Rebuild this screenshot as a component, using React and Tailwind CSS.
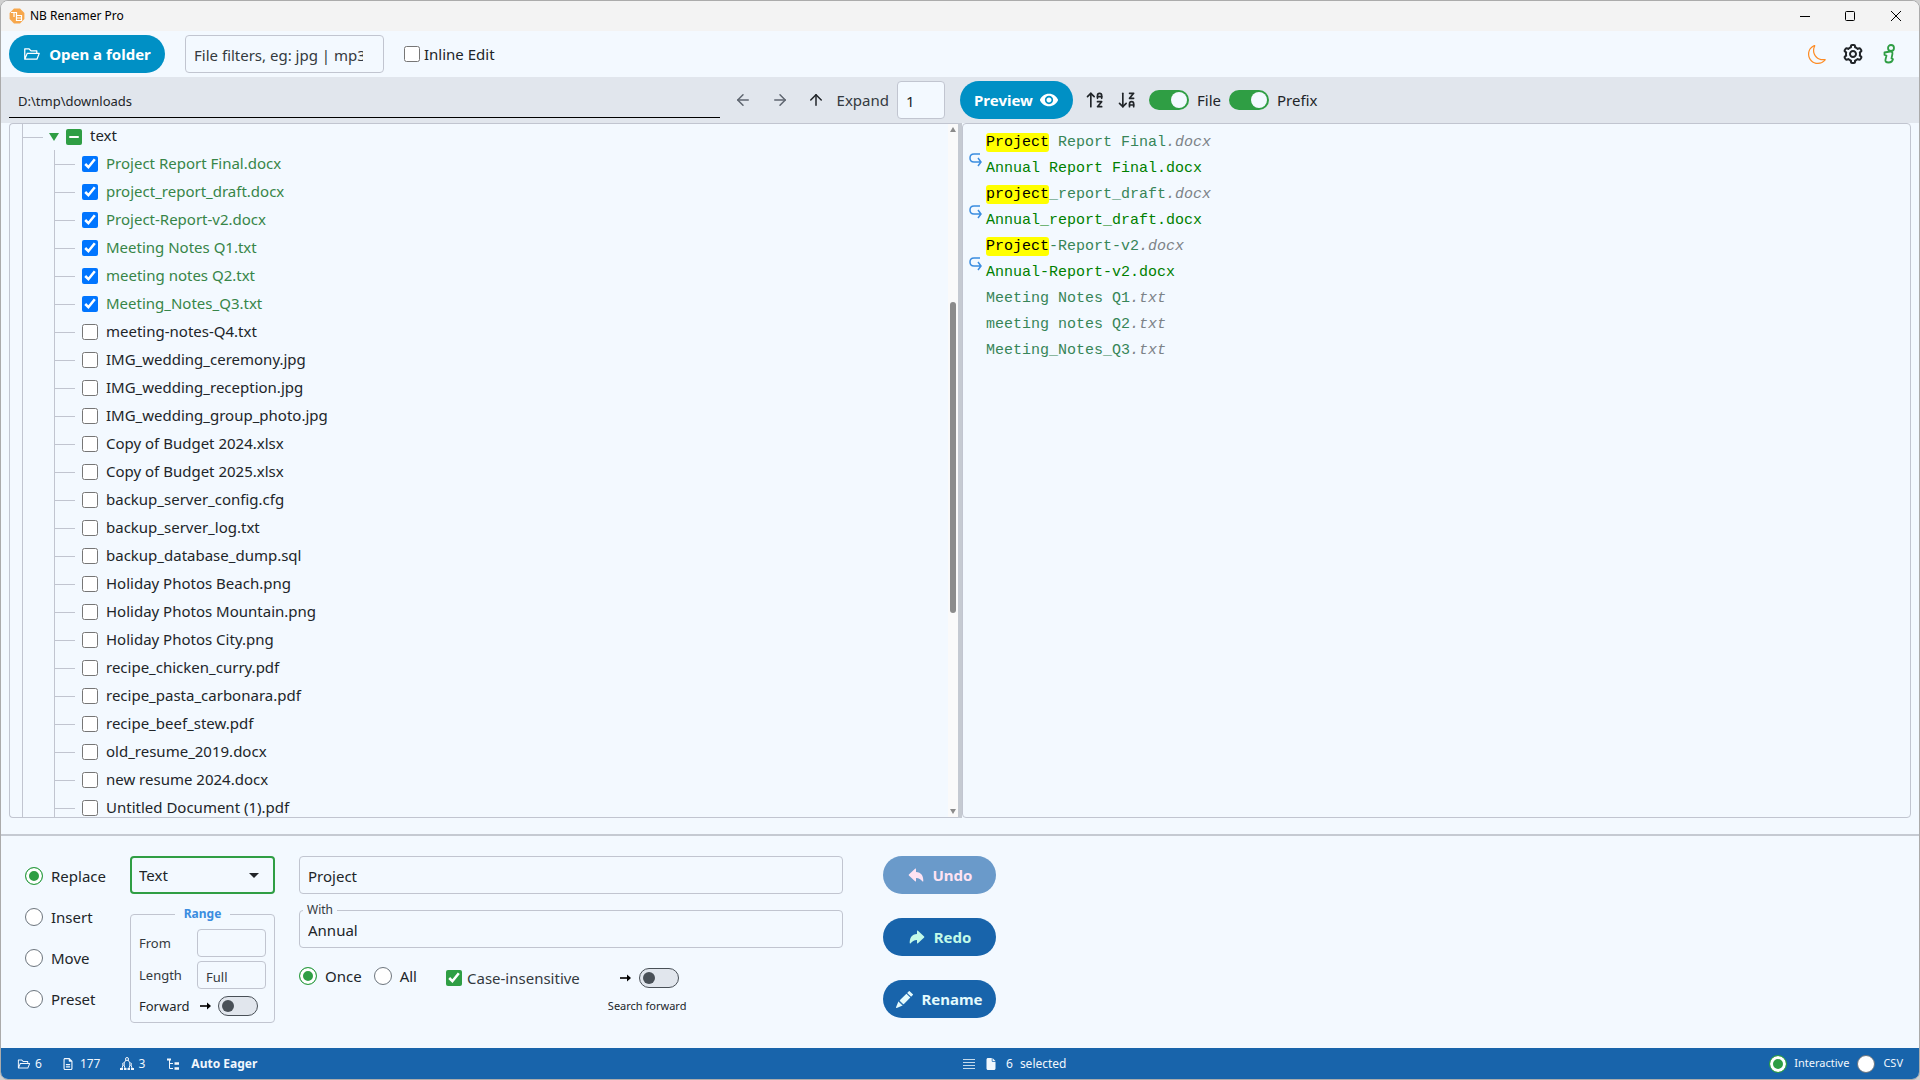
import { useState } from "react";
import { AiOutlineFolderOpen } from "react-icons/ai";
import { BiCog } from "react-icons/bi";
import { BsMoon, BsPencilFill } from "react-icons/bs";
import { FaFile, FaRegFileLines } from "react-icons/fa6";
import { IoArrowRedo, IoArrowUndo } from "react-icons/io5";
import { LuArrowDownZA, LuArrowUpAZ } from "react-icons/lu";
import { MdVisibility } from "react-icons/md";
import { ArrowLeft, ArrowRight, ArrowUp } from "lucide-react";

const FILES = [
    "Project Report Final.docx",
    "project_report_draft.docx",
    "Project-Report-v2.docx",
    "Meeting Notes Q1.txt",
    "meeting notes Q2.txt",
    "Meeting_Notes_Q3.txt",
    "meeting-notes-Q4.txt",
    "IMG_wedding_ceremony.jpg",
    "IMG_wedding_reception.jpg",
    "IMG_wedding_group_photo.jpg",
    "Copy of Budget 2024.xlsx",
    "Copy of Budget 2025.xlsx",
    "backup_server_config.cfg",
    "backup_server_log.txt",
    "backup_database_dump.sql",
    "Holiday Photos Beach.png",
    "Holiday Photos Mountain.png",
    "Holiday Photos City.png",
    "recipe_chicken_curry.pdf",
    "recipe_pasta_carbonara.pdf",
    "recipe_beef_stew.pdf",
    "old_resume_2019.docx",
    "new resume 2024.docx",
    "Untitled Document (1).pdf",
];

const PREVIEWS = [
    { match: "Project", rest: " Report Final", ext: ".docx", renamed: "Annual Report Final.docx" },
    { match: "project", rest: "_report_draft", ext: ".docx", renamed: "Annual_report_draft.docx" },
    { match: "Project", rest: "-Report-v2", ext: ".docx", renamed: "Annual-Report-v2.docx" },
    { rest: "Meeting Notes Q1", ext: ".txt" },
    { rest: "meeting notes Q2", ext: ".txt" },
    { rest: "Meeting_Notes_Q3", ext: ".txt" },
];

const MODES = ["Replace", "Insert", "Move", "Preset"];

export default function App() {
    const [checked, setChecked] = useState(() => new Set(FILES.slice(0, 6)));

    const toggle = (name) => {
        const next = new Set(checked);
        if (next.has(name)) next.delete(name);
        else next.add(name);
        setChecked(next);
    };

    return (
        <div className="h-screen bg-[#d0d0d0]">
            <div className="h-full flex flex-col overflow-hidden rounded-lg border border-[#ababab] bg-[#f3f9ff] text-[15px] leading-5 text-[#212529] font-['Noto_Sans',sans-serif]">
                <TitleBar />
                <Toolbar />
                <div className="h-[46px] shrink-0 flex bg-[#e1e6ed]">
                    <PathBar />
                    <PreviewBar />
                </div>
                <main className="flex-1 min-h-0 flex px-2 pb-4">
                    <FileTree checked={checked} onToggle={toggle} />
                    <div className="w-1 shrink-0 bg-[#c5cad2]"></div>
                    <PreviewList />
                </main>
                <RenamePanel />
                <StatusBar />
            </div>
        </div>
    );
}

function TitleBar() {
    return (
        <header className="h-[30px] shrink-0 flex items-center bg-[#f3f3f3] pl-2 text-xs text-black">
            <AppLogo />
            <span className="ml-[5px]">NB Renamer Pro</span>
            <div className="ml-auto flex">
                <button aria-label="Minimize" className="w-[45px] h-7 flex items-center justify-center">
                    <svg width="10" height="10" viewBox="0 0 10 10"><path d="M0 5.5h10" stroke="black" /></svg>
                </button>
                <button aria-label="Maximize" className="w-[45px] h-7 flex items-center justify-center">
                    <svg width="10" height="10" viewBox="0 0 10 10"><rect x=".5" y=".5" width="9" height="9" rx="1" fill="none" stroke="black" /></svg>
                </button>
                <button aria-label="Close" className="w-[47px] h-7 flex items-center justify-center">
                    <svg width="10" height="10" viewBox="0 0 10 10"><path d="M0 0l10 10M10 0L0 10" stroke="black" /></svg>
                </button>
            </div>
        </header>
    );
}

function Toolbar() {
    return (
        <div className="h-[46px] shrink-0 flex items-center pl-2 pr-5">
            <button className="h-[38px] w-[156px] flex items-center justify-center gap-2 rounded-full bg-[#0090c5] text-white font-bold">
                <AiOutlineFolderOpen size={18} /> Open a folder
            </button>
            <input
                aria-label="File filters"
                placeholder="File filters, eg: jpg | mp3"
                className="ml-5 w-[199px] h-[38px] pl-2 pr-5 pt-0.5 rounded border border-[#c1c5d0] placeholder:text-[#343a40]"
            />
            <label className="ml-5 flex items-center gap-1">
                <input type="checkbox" className="size-4" /> Inline Edit
            </label>
            <div className="ml-auto flex items-center gap-3.5">
                <button aria-label="Dark mode" className="text-[#fd8c25]"><BsMoon size={19} /></button>
                <button aria-label="Settings"><BiCog size={24} /></button>
                <button aria-label="About" className="text-[#2f9e44]"><InfoIcon /></button>
            </div>
        </div>
    );
}

function PathBar() {
    return (
        <div className="w-1/2 flex items-center pl-2">
            <input
                aria-label="Current folder"
                defaultValue="D:\tmp\downloads"
                className="flex-1 min-w-0 h-[32px] mt-1 pb-0.5 pl-[9px] border-b border-black text-[13px] text-[#212529]"
            />
            <button aria-label="Back" className="ml-3.5 text-[#5f6670]"><ArrowLeft size={18} /></button>
            <button aria-label="Forward" className="ml-[19px] text-[#5f6670]"><ArrowRight size={18} /></button>
            <button aria-label="Up" className="ml-[18px]"><ArrowUp size={18} /></button>
            <label className="ml-3 mr-[15px] flex items-center gap-2 text-[#343a40]">
                Expand
                <input defaultValue="1" className="w-12 h-[38px] px-2 pt-0.5 rounded border border-[#c1c5d0] bg-[#f3f9ff] text-[#212529]" />
            </label>
        </div>
    );
}

function PreviewBar() {
    return (
        <div className="w-1/2 flex items-center text-[#212529]">
            <button className="h-[38px] w-[113px] flex items-center justify-center gap-1.5 rounded-full bg-[#0090c5] text-white font-bold">
                Preview <MdVisibility size={20} />
            </button>
            <button aria-label="Sort ascending" className="ml-3"><LuArrowUpAZ size={20} /></button>
            <button aria-label="Sort descending" className="ml-3"><LuArrowDownZA size={20} /></button>
            <Toggle label="File" className="ml-3" />
            <Toggle label="Prefix" className="ml-2" />
        </div>
    );
}

function Toggle({ label, className }) {
    return (
        <label className={`flex items-center gap-2 ${className}`}>
            <input type="checkbox" defaultChecked className="peer sr-only" />
            <span className="w-10 h-5 p-0.5 flex justify-start peer-checked:justify-end rounded-full bg-[#adb5bd] peer-checked:bg-[#2f9e44]">
                <span className="size-4 rounded-full bg-[#f3f9ff]"></span>
            </span>
            {label}
        </label>
    );
}

function OffToggle({ label }) {
    return (
        <span className="relative flex w-10 h-5 items-center rounded-full border border-[#495057] bg-[#e1e6ed] pl-[3px]">
            <input type="checkbox" aria-label={label} className="absolute inset-0 opacity-0" />
            <span className="size-3 rounded-full bg-[#495057]"></span>
        </span>
    );
}

function FileTree({ checked, onToggle }) {
    return (
        <section className="w-[calc(50%-2px)] shrink-0 flex rounded-l border border-r-0 border-[#c1c5d0]">
            <div className="flex-1 min-w-0 overflow-hidden pl-3">
                <div className="border-l border-[#c1c5d0]">
                    <div className="h-[26px] flex items-center">
                        <span className="w-5 h-px bg-[#c1c5d0]"></span>
                        <svg width="10" height="8" viewBox="0 0 10 8" className="ml-[6px]"><path d="M0 0h10L5 8z" fill="#2f9e44" /></svg>
                        <span className="ml-[7px] size-4 flex items-center justify-center rounded-[2px] bg-[#2f9e44]">
                            <span className="w-2.5 h-0.5 rounded bg-white"></span>
                        </span>
                        <span className="ml-2 pb-1">text</span>
                    </div>
                    <ul className="ml-[31px] border-l border-[#c1c5d0]">
                        {FILES.map((name) => (
                            <li key={name} className="h-7 flex items-center">
                                <span className="w-5 h-px bg-[#c1c5d0]"></span>
                                <label className="ml-[7px] flex items-center">
                                    <input type="checkbox" checked={checked.has(name)} onChange={() => onToggle(name)} className="size-4" />
                                    <span className={`ml-2 pb-0.5 ${checked.has(name) ? "text-[#378548]" : ""}`}>{name}</span>
                                </label>
                            </li>
                        ))}
                    </ul>
                </div>
            </div>
            {/* scrollbar */}
            <div className="w-2.5 flex flex-col items-center bg-[#fafafa]">
                <svg width="6" height="5" viewBox="0 0 6 5" className="mt-[3px]"><path d="M3 0l3 5H0z" fill="#8b8b8b" /></svg>
                <div className="basis-[170px] shrink-0"></div>
                <div className="w-1.5 h-[311px] rounded-full bg-[#8b8b8b]"></div>
                <svg width="6" height="5" viewBox="0 0 6 5" className="mt-auto mb-[3px]"><path d="M0 0h6L3 5z" fill="#8b8b8b" /></svg>
            </div>
        </section>
    );
}

function PreviewList() {
    return (
        <section className="flex-1 min-w-0 pl-1.5 pt-1.5 rounded border border-[#c1c5d0] font-['Liberation_Mono',monospace] leading-[26px]">
            {PREVIEWS.map((p) => (
                <div key={p.rest} className="flex items-start">
                    <div className="w-[17px] pt-[23px]">{p.renamed && <RenameArrow />}</div>
                    <div className="whitespace-pre">
                        <p className="text-[#378558]">
                            {p.match && <mark className="rounded-[3px] bg-[#ffff00] py-px text-black">{p.match}</mark>}
                            {p.rest}
                            <em className="text-[#7d8388]">{p.ext}</em>
                        </p>
                        {p.renamed && <p className="text-[#008000]">{p.renamed}</p>}
                    </div>
                </div>
            ))}
        </section>
    );
}

function Radio({ name, label, defaultChecked, className }) {
    return (
        <label className={`flex items-center ${className}`}>
            <input
                type="radio"
                name={name}
                defaultChecked={defaultChecked}
                className="appearance-none size-[18px] rounded-full border border-[#6c757d] bg-white checked:border-[#2f9e44] checked:bg-[#2f9e44] checked:shadow-[inset_0_0_0_3px_#fff]"
            />
            {label}
        </label>
    );
}

function RenamePanel() {
    return (
        <section className="h-[214px] shrink-0 flex items-start border-t-2 border-[#c5cad2] pl-6 pt-5">
            <div className="w-[105px] flex flex-col gap-[21px] pt-[10px]">
                {MODES.map((mode, i) => (
                    <Radio key={mode} name="mode" label={mode} defaultChecked={i === 0} className="gap-2" />
                ))}
            </div>

            <div className="w-[145px]">
                <div className="relative">
                    <select aria-label="Replace type" className="appearance-none w-full h-[38px] px-[7px] rounded border-2 border-[#2f9e44] text-[#212529]">
                        <option>Text</option>
                    </select>
                    <svg width="10" height="5" viewBox="0 0 10 5" className="absolute right-4 top-[17px] pointer-events-none"><path d="M0 0h10L5 5z" fill="#212529" /></svg>
                </div>
                <fieldset className="mt-3 h-[117px] px-2 rounded border border-[#c1c5d0] text-[13px] text-[#343a40]">
                    <legend className="mx-auto px-[9px] text-xs font-bold text-[#3b8de0]">Range</legend>
                    <label className="mt-[7px] flex items-center justify-between">
                        From
                        <input className="w-[69px] h-7 px-2 rounded border border-[#c1c5d0]" />
                    </label>
                    <label className="mt-1 flex items-center justify-between">
                        Length
                        <input defaultValue="Full" className="w-[69px] h-7 px-2 pt-1 rounded border border-[#c1c5d0]" />
                    </label>
                    <div className="mt-[7px] flex items-center text-[#212529]">
                        <span className="w-[61px]">Forward</span>
                        <SmallArrow />
                        <span className="ml-[7px]"><OffToggle label="Forward" /></span>
                    </div>
                </fieldset>
            </div>

            <div className="ml-6 w-[544px]">
                <input aria-label="Search text" defaultValue="Project" className="block w-full h-[38px] pl-2 pt-0.5 rounded border border-[#c1c5d0]" />
                <div className="relative mt-4">
                    <input id="with" defaultValue="Annual" className="block w-full h-[38px] pl-2 pt-0.5 rounded border border-[#c1c5d0]" />
                    <label htmlFor="with" className="absolute left-1 -top-2 px-1 bg-[#f3f9ff] text-xs text-[#343a40]">With</label>
                </div>
                <div className="mt-[18px] flex items-start">
                    <Radio name="count" label="Once" defaultChecked className="gap-2" />
                    <Radio name="count" label="All" className="ml-3 gap-2" />
                    <label className="ml-[29px] mt-0.5 flex items-center gap-[5px] text-[#343a40]">
                        <input type="checkbox" defaultChecked className="size-4 accent-[#2f9e44]" /> Case-insensitive
                    </label>
                    <div className="ml-7 mt-0.5 flex flex-col items-center gap-2 text-[11px]">
                        <span className="pl-1 flex items-center gap-2">
                            <SmallArrow />
                            <OffToggle label="Search forward" />
                        </span>
                        Search forward
                    </div>
                </div>
            </div>

            <div className="ml-10 w-[113px] flex flex-col gap-6 font-bold">
                <button className="h-[38px] flex items-center justify-center gap-2 rounded-full bg-[#6a9aca] text-[#ffe3f3]">
                    <IoArrowUndo size={18} /> Undo
                </button>
                <button className="h-[38px] flex items-center justify-center gap-2 rounded-full bg-[#1864ab] text-[#c3fae8]">
                    <IoArrowRedo size={18} /> Redo
                </button>
                <button className="h-[38px] flex items-center justify-center gap-2 rounded-full bg-[#1864ab] text-[#e3fafc]">
                    <BsPencilFill size={17} /> Rename
                </button>
            </div>
        </section>
    );
}

function StatusBar() {
    return (
        <footer className="h-[31px] shrink-0 flex items-center bg-[#1864ab] px-4 text-xs text-[#f1f7fd]">
            <div className="w-1/2 flex items-center">
                <AiOutlineFolderOpen size={14} />
                <span className="ml-1">6</span>
                <FaRegFileLines size={12} className="ml-5" />
                <span className="ml-1.5">177</span>
                <TreeIcon />
                <span className="ml-1">3</span>
                <ListTreeIcon />
                <span className="ml-3 font-bold">Auto Eager</span>
            </div>
            <div className="flex items-center">
                <svg width="12" height="10" viewBox="0 0 12 10" className="ml-[3px]"><path d="M0 .5h12M0 3.5h12M0 6.5h12M0 9.5h12" stroke="currentColor" strokeOpacity=".8" /></svg>
                <FaFile size={12} className="ml-2.5" />
                <span className="ml-[9px]">6</span>
                <span className="ml-[7px]">selected</span>
            </div>
            <div className="ml-auto flex items-center text-[11px]">
                <Radio name="output" label="Interactive" defaultChecked className="gap-[7px]" />
                <Radio name="output" label="CSV" className="ml-2 gap-2" />
            </div>
        </footer>
    );
}

function AppLogo() {
    return (
        <svg width="16" height="16" viewBox="0 0 16 16">
            <path d="M5 .6h6L15.4 5v6L11 15.4H5L.6 11V5z" fill="#f7a74c" />
            <path d="M2 4.5h5.5M5 4.5V9M7.5 4v8.500h5V7.500h-5M7.500 10h5" fill="none" stroke="#fff" strokeWidth="1.2" />
        </svg>
    );
}

function InfoIcon() {
    return (
        <svg width="20" height="20" viewBox="0 0 20 20" fill="none" stroke="currentColor" strokeWidth="1.8" strokeLinejoin="round">
            <circle cx="12" cy="4" r="3" />
            <path d="M5.5 8.5L11 7.5C13 7.3 13.8 8.5 13.4 10L12.500 14.5L14 15C13.500 17.5 12 18.5 9.500 18.5C7 18.5 6 17.5 6.500 15.5L7.500 11.5L5.500 11z" />
        </svg>
    );
}

function SmallArrow() {
    return (
        <svg width="11" height="8" viewBox="0 0 11 8">
            <path d="M0 4h8" stroke="black" strokeWidth="1.6" />
            <path d="M7 .5L11 4 7 7.5z" fill="black" />
        </svg>
    );
}

function RenameArrow() {
    return (
        <svg width="13" height="14" viewBox="0 0 13 14" fill="none" stroke="#3b8de0" strokeWidth="1.5">
            <path d="M11 1H5C2 1 1 3 1 5s1 4 4 4h7M9 5l3 4-3 4" />
        </svg>
    );
}

function TreeIcon() {
    return (
        <svg width="14" height="13" viewBox="0 0 14 13" fill="none" stroke="currentColor" className="ml-5">
            <circle cx="7" cy="2" r="1.5" />
            <path d="M6 3L4 6M8 3l2 3M3 8l-1 3M4 8l1 3M10 8l-1 3M11 8l1 3" />
            <circle cx="3.5" cy="7" r="1" />
            <circle cx="10.5" cy="7" r="1" />
            <path d="M0 12h3M4 12h2.5M7.5 12H10M11 12h3" strokeWidth="2" />
        </svg>
    );
}

function ListTreeIcon() {
    return (
        <svg width="12" height="12" viewBox="0 0 12 12" fill="none" stroke="currentColor" className="ml-[22px]">
            <path d="M0 1.5h4" strokeWidth="2" />
            <path d="M2.5 2v8.5H6M2.5 5.5H6" />
            <path d="M7.5 5.5H12M7.5 10.5H12" strokeWidth="2.5" />
        </svg>
    );
}
